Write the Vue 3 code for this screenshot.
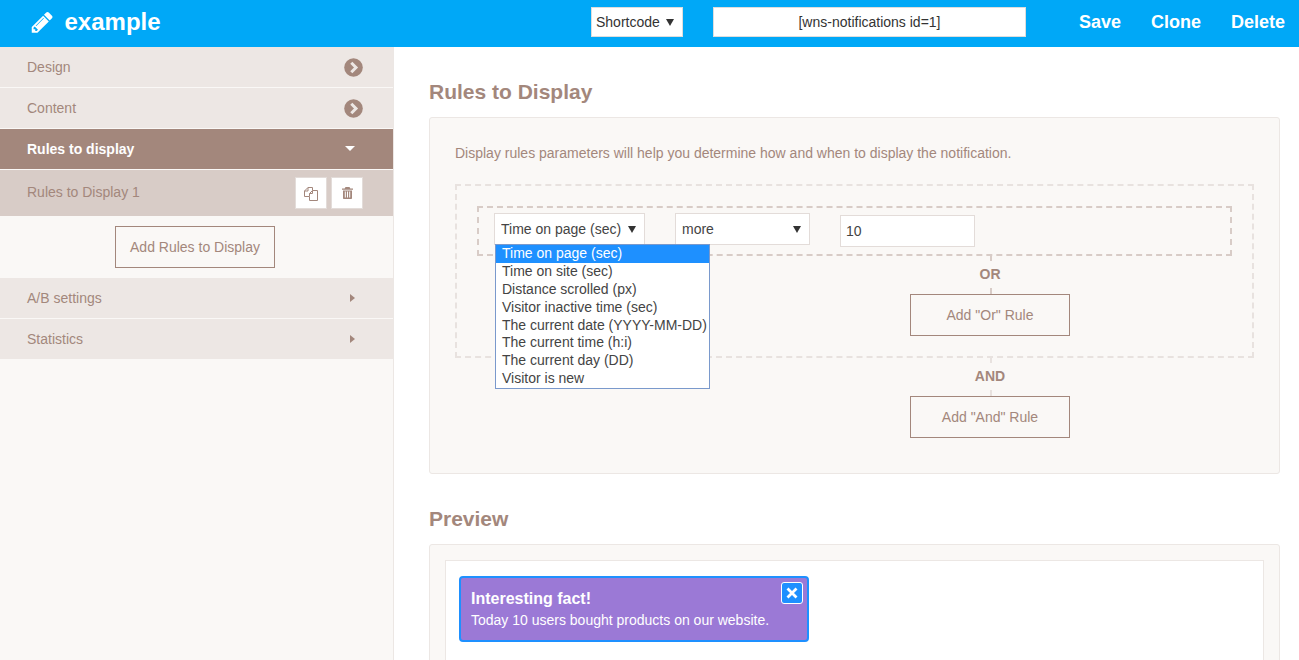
<script setup>
const options = [
  'Time on page (sec)',
  'Time on site (sec)',
  'Distance scrolled (px)',
  'Visitor inactive time (sec)',
  'The current date (YYYY-MM-DD)',
  'The current time (h:i)',
  'The current day (DD)',
  'Visitor is new'
]
</script>

<template>
  <div class="page">
    <header class="topbar">
      <div class="brand">
        <svg class="pencil" width="24.5" height="24.5" viewBox="0 0 1792 1792">
          <path fill="#fff" d="M491 1536l91-91-235-235-91 91v107h128v128h107zm523-928q0-22-22-22-10 0-17 7l-542 542q-7 7-7 17 0 22 22 22 10 0 17-7l542-542q7-7 7-17zm-54-192l416 416-832 832h-416v-416zm683 96q0 53-37 90l-166 166-416-416 166-165q36-38 90-38 53 0 91 38l235 234q37 39 37 91z" />
        </svg>
        <span class="title">example</span>
      </div>
      <div class="fake-select shortcode">Shortcode <i class="arrow"></i></div>
      <div class="shortcode-value">[wns-notifications id=1]</div>
      <nav class="actions">
        <a>Save</a>
        <a>Clone</a>
        <a>Delete</a>
      </nav>
    </header>

    <div class="body">
      <aside class="sidebar">
        <div class="nav-row">
          <span>Design</span>
          <svg class="chevron" width="19" height="19" viewBox="0 0 19 19">
            <circle cx="9.500" cy="9.500" r="9.300" fill="#a3877c" />
            <path d="M7.300 4.800l4.700 4.700-4.700 4.700" fill="none" stroke="#ede7e4" stroke-width="3" />
          </svg>
        </div>
        <div class="nav-row">
          <span>Content</span>
          <svg class="chevron" width="19" height="19" viewBox="0 0 19 19">
            <circle cx="9.500" cy="9.500" r="9.300" fill="#a3877c" />
            <path d="M7.300 4.800l4.700 4.700-4.700 4.700" fill="none" stroke="#ede7e4" stroke-width="3" />
          </svg>
        </div>
        <div class="nav-row active">
          <span>Rules to display</span>
          <i class="caret-down"></i>
        </div>
        <div class="sub-row">
          <span>Rules to Display 1</span>
          <div class="sub-actions">
            <button class="icon-btn">
              <svg width="16" height="15" viewBox="0 0 16 15" fill="none" stroke="#a3877c" stroke-width="1">
                <path d="M6.500 10.500H1.500V5L5 1.500h4.500V4" />
                <path d="M5 1.500V5H1.500" />
                <path d="M6.500 10.500V7.500L9.500 4.500H14.500V14.500H6.500z" fill="#fff" />
                <path d="M9.500 4.500V7.500H6.500" />
              </svg>
            </button>
            <button class="icon-btn">
              <svg width="11" height="12" viewBox="0 0 11 12">
                <path fill="#a3877c" d="M3.500 0h4l.8 1.500H11v1.200H0V1.500h2.700zM1 3.500h9v7.500c0 .6-.4 1-1 1H2c-.6 0-1-.4-1-1z" />
                <path fill="#fff" d="M2.800 4.500h1v6h-1zM5 4.500h1v6H5zM7.200 4.500h1v6h-1z" />
              </svg>
            </button>
          </div>
        </div>
        <div class="add-wrap">
          <button class="outline-btn">Add Rules to Display</button>
        </div>
        <div class="nav-row">
          <span>A/B settings</span>
          <i class="caret-right"></i>
        </div>
        <div class="nav-row">
          <span>Statistics</span>
          <i class="caret-right"></i>
        </div>
      </aside>

      <main class="content">
        <h2>Rules to Display</h2>
        <section class="panel rules-panel">
          <p class="hint">Display rules parameters will help you determine how and when to display the notification.</p>
          <div class="or-group">
            <div class="rule-line">
              <div class="select-wrap">
                <div class="fake-select param"><span class="clip">Time on page (sec)</span> <i class="arrow"></i></div>
                <ul class="dropdown">
                  <li v-for="(o, i) in options" :key="o" :class="{ picked: i === 0 }">{{ o }}</li>
                </ul>
              </div>
              <div class="fake-select compare">more <i class="arrow"></i></div>
              <div class="value-input">10</div>
            </div>
            <div class="joiner">
              <i class="tick tick-top"></i>
              <b>OR</b>
              <i class="tick"></i>
              <button class="outline-btn">Add "Or" Rule</button>
            </div>
          </div>
          <div class="joiner">
            <i class="tick tick-top light"></i>
            <b>AND</b>
            <i class="tick light"></i>
            <button class="outline-btn">Add "And" Rule</button>
          </div>
        </section>

        <h2 class="preview-title">Preview</h2>
        <section class="panel preview-panel">
          <div class="preview-stage">
            <div class="notice">
              <strong>Interesting fact!</strong>
              <span>Today 10 users bought products on our website.</span>
              <button class="notice-close">
                <svg width="12" height="12" viewBox="0 0 12 12">
                  <path d="M1.500 1.500l9 9M10.500 1.500l-9 9" stroke="#fff" stroke-width="2.800" />
                </svg>
              </button>
            </div>
          </div>
        </section>
      </main>
    </div>
  </div>
</template>

<style>
html, body {
  margin: 0;
  overflow: hidden;
}
</style>

<style scoped>
.page {
  height: 660px;
  overflow: hidden;
  font-family: "Liberation Sans", Arial, sans-serif;
  font-size: 14px;
  color: #a3877c;
  background: #fff;
}

.topbar {
  height: 47px;
  box-sizing: border-box;
  padding-bottom: 3px;
  display: flex;
  align-items: center;
  background: #00a8f7;
}

.brand {
  width: 591px;
  display: flex;
  align-items: center;
  padding-left: 30px;
  box-sizing: border-box;
  color: #fff;
}

.pencil {
  margin-right: 10px;
}

.title {
  font-size: 24px;
  font-weight: bold;
}

.fake-select {
  display: flex;
  align-items: center;
  justify-content: space-between;
  box-sizing: border-box;
  background: #fff;
  color: #444;
  white-space: nowrap;
}

.arrow {
  flex: none;
  width: 0;
  height: 0;
  border-left: 4px solid transparent;
  border-right: 4px solid transparent;
  border-top: 7px solid #333;
}

.clip {
  width: 120px;
  overflow: hidden;
}

.shortcode {
  width: 92px;
  height: 30px;
  padding: 0 8px 0 4px;
  border: 1px solid #ddd;
  color: #333;
}

.shortcode-value {
  width: 313px;
  height: 30px;
  margin-left: 30px;
  box-sizing: border-box;
  border: 1px solid #ddd;
  background: #fff;
  color: #333;
  font-size: 14px;
  line-height: 28px;
  text-align: center;
}

.actions {
  margin-left: auto;
  display: flex;
  gap: 30px;
  padding-right: 14px;
  color: #fff;
  font-size: 18px;
  font-weight: bold;
}

.body {
  display: flex;
  height: 613px;
}

.sidebar {
  width: 394px;
  flex: none;
  box-sizing: border-box;
  background: #faf8f6;
  border-right: 1px solid #ece7e4;
}

.nav-row {
  height: 41px;
  display: flex;
  align-items: center;
  justify-content: space-between;
  box-sizing: border-box;
  padding: 0 30px 1px 27px;
  background: #ede7e4;
  border-bottom: 1px solid #faf8f6;
}

.nav-row:last-child {
  height: 40px;
  border-bottom: 0;
}

.nav-row.active {
  background: #a3877c;
  color: #fff;
  font-weight: bold;
}

.chevron {
  margin-top: 1px;
}

.caret-down {
  width: 0;
  height: 0;
  margin-right: 8px;
  border-left: 5px solid transparent;
  border-right: 5px solid transparent;
  border-top: 5px solid #fff;
}

.caret-right {
  width: 0;
  height: 0;
  margin-right: 8px;
  border-top: 4.500px solid transparent;
  border-bottom: 4.500px solid transparent;
  border-left: 5px solid #a3877c;
}

.sub-row {
  height: 46px;
  display: flex;
  align-items: center;
  justify-content: space-between;
  box-sizing: border-box;
  padding: 0 30px 0 27px;
  background: #d8ccc7;
}

.sub-row > span {
  margin-bottom: 2px;
}

.sub-actions {
  display: flex;
  gap: 4px;
}

.icon-btn {
  width: 32px;
  height: 32px;
  padding: 0;
  display: flex;
  align-items: center;
  justify-content: center;
  background: #fff;
  border: 1px solid #e3dcd9;
}

.add-wrap {
  height: 62px;
  display: flex;
  align-items: center;
  justify-content: center;
  padding-right: 4px;
  background: #faf8f6;
}

.outline-btn {
  width: 160px;
  height: 42px;
  padding: 0 0 0 1px;
  box-sizing: border-box;
  background: transparent;
  border: 1px solid #a3877c;
  color: #a3877c;
  font-family: inherit;
  font-size: 14px;
}

.content {
  flex: 1;
  min-width: 0;
  padding: 34px 19px 0 35px;
}

h2 {
  margin: 0 0 14px;
  font-size: 21px;
  line-height: 22px;
  font-weight: bold;
  color: #a3877c;
}

.panel {
  box-sizing: border-box;
  background: #faf8f6;
  border: 1px solid #ece7e4;
  border-radius: 3px;
}

.rules-panel {
  height: 357px;
  padding: 27px 25px 0;
}

.hint {
  margin: 0 0 22px;
  line-height: 17px;
}

.or-group {
  height: 174px;
  box-sizing: border-box;
  padding-top: 20px;
  border: 2px dashed #e8e2df;
}

.rule-line {
  height: 50px;
  margin: 0 20px;
  box-sizing: border-box;
  display: flex;
  align-items: flex-start;
  padding: 5px 0 0 15px;
  border: 2px dashed #d8ccc7;
}

.select-wrap {
  position: relative;
  width: 151px;
  flex: none;
}

.param,
.compare {
  height: 32px;
  border: 1px solid #e3dcd9;
  color: #444;
}

.param {
  padding: 0 8px 0 6px;
}

.compare {
  width: 135px;
  flex: none;
  margin-left: 30px;
  padding: 0 8px 0 6px;
}

.dropdown {
  position: absolute;
  top: 31px;
  left: 1px;
  width: 215px;
  box-sizing: border-box;
  margin: 0;
  padding: 0;
  list-style: none;
  background: #fff;
  border: 1px solid #7a99cc;
  z-index: 5;
  color: #444;
  white-space: nowrap;
}

.dropdown li {
  height: 17.875px;
  line-height: 17px;
  padding-left: 6px;
}

.dropdown li.picked {
  background: #1e90ff;
  color: #fff;
}

.value-input {
  width: 135px;
  height: 32px;
  flex: none;
  margin: 2px 0 0 30px;
  box-sizing: border-box;
  padding-left: 5px;
  line-height: 30px;
  background: #fff;
  border: 1px solid #e3dcd9;
  color: #444;
}

.joiner {
  width: 160px;
  margin: 0 auto;
  position: relative;
  left: 135px;
  display: flex;
  flex-direction: column;
  align-items: center;
}

.joiner b {
  height: 27px;
  line-height: 27px;
  font-size: 14px;
  margin-left: 1px;
}

.tick {
  display: block;
  width: 2px;
  height: 6px;
  margin-left: 2px;
  background: #d8ccc7;
}

.tick.tick-top {
  height: 5px;
}

.tick.light {
  background: #e8e2df;
}

.preview-title {
  margin: 34px 0 14px;
}

.preview-panel {
  height: 200px;
  padding: 15px;
}

.preview-stage {
  height: 200px;
  box-sizing: border-box;
  padding: 15px 13px;
  background: #fff;
  border: 1px solid #ece7e4;
}

.notice {
  position: relative;
  width: 350px;
  height: 66px;
  box-sizing: border-box;
  padding: 11px 10px 0;
  display: flex;
  flex-direction: column;
  background: #9b79d6;
  border: 2px solid #1e90ff;
  border-radius: 4px;
  color: #fff;
}

.notice strong {
  font-size: 16px;
  line-height: 20px;
}

.notice span {
  margin-top: 3px;
  font-size: 14px;
  line-height: 17px;
}

.notice-close {
  position: absolute;
  top: 4px;
  right: 4px;
  width: 22px;
  height: 22px;
  padding: 0;
  display: flex;
  align-items: center;
  justify-content: center;
  background: #1e90ff;
  border: 1px solid #fff;
  border-radius: 3px;
}
</style>
